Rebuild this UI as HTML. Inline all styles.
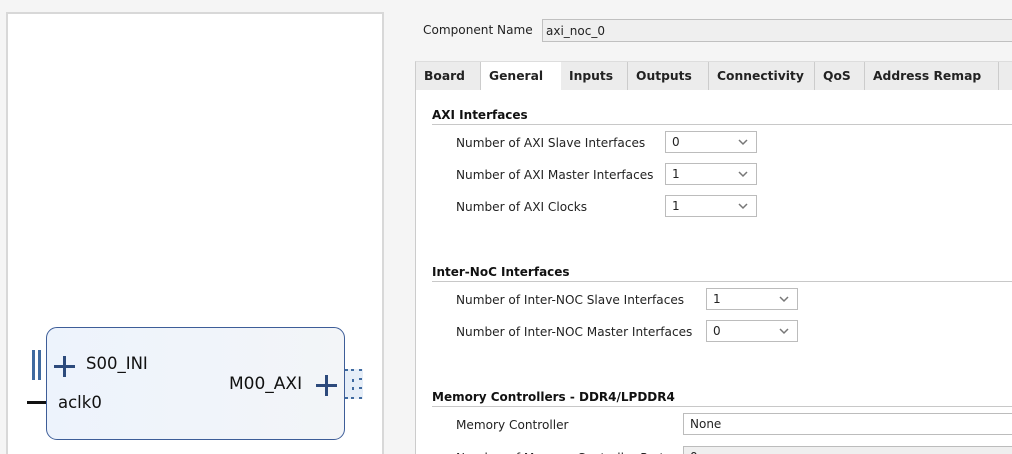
<!DOCTYPE html>
<html style="overflow:hidden"><head><style>
body{margin:0;width:1012px;height:454px;overflow:hidden;background:#f5f5f5;font-family:"DejaVu Sans","Liberation Sans",sans-serif;position:relative;font-size:12px;color:#222}
.a{position:absolute}
.lbl{position:absolute;font-size:12.1px;color:#222;white-space:nowrap}
.cb{position:absolute;height:22px;background:#fff;border:1px solid #bcbcbc;box-sizing:border-box;font-size:12px;line-height:21px;padding-left:6px}
.cb svg{position:absolute;right:8px;top:7px}
.sec{position:absolute;left:432px;font-weight:bold;font-size:12px;color:#111}
.hr{position:absolute;left:432px;right:0;height:1px;background:#c8c8c8}
.tab{position:absolute;top:62px;height:28px;line-height:29px;font-weight:bold;font-size:12.3px;color:#222;padding:0 8px;box-sizing:border-box;border-right:1px solid #ccc}
</style></head><body>
<div class="a" style="left:6px;top:12px;width:378px;height:442px;background:#fff;border:2px solid #d8d8d8;border-bottom:none;box-sizing:border-box"></div>
<div class="a" style="left:46px;top:327px;width:299px;height:113px;border:1px solid #3d5d98;border-radius:11px;background:linear-gradient(90deg,#edf3fc,#f3f5f8);box-sizing:border-box"></div>
<div class="a" style="left:32px;top:350px;width:3px;height:30px;background:#3f6aa0"></div>
<div class="a" style="left:38px;top:350px;width:3px;height:30px;background:#3f6aa0"></div>
<div class="a" style="left:27px;top:401px;width:19px;height:3px;background:#111"></div>
<div class="a" style="left:54px;top:365px;width:21px;height:3px;background:#2d4a7c"></div>
<div class="a" style="left:63px;top:356px;width:3px;height:21px;background:#2d4a7c"></div>
<div class="a" style="left:316px;top:384px;width:21px;height:3px;background:#2d4a7c"></div>
<div class="a" style="left:325px;top:375px;width:3px;height:21px;background:#2d4a7c"></div>
<svg class="a" style="left:345px;top:369px" width="18" height="30"><rect x="0" y="0" width="18" height="30" fill="#e6eef8"/><g fill="#3f6aa0"><rect x="0" y="0" width="3" height="2"/><rect x="6" y="0" width="3" height="2"/><rect x="14" y="0" width="3" height="2"/><rect x="14" y="9" width="3" height="2"/><rect x="14" y="18" width="3" height="2"/><rect x="0" y="28" width="3" height="2"/><rect x="6" y="28" width="3" height="2"/><rect x="14" y="28" width="3" height="2"/><rect x="7" y="10" width="2" height="3"/><rect x="7" y="18" width="2" height="3"/></g></svg>
<div class="lbl" style="left:86px;top:354px;font-size:16.5px;color:#111">S00_INI</div>
<div class="lbl" style="left:58px;top:393px;font-size:16.5px;color:#111">aclk0</div>
<div class="lbl" style="left:229px;top:374px;font-size:17px;color:#111">M00_AXI</div>
<div class="lbl" style="left:423px;top:23px">Component Name</div>
<div class="a" style="left:542px;top:19px;width:480px;height:23px;background:#efefef;border:1px solid #c0c0c0;box-sizing:border-box;line-height:22px;padding-left:3px;font-size:12px">axi_noc_0</div>
<div class="a" style="left:415px;top:61px;width:600px;height:400px;background:#fff;border-left:1px solid #ccc;border-top:1px solid #ddd"></div>
<div class="a" style="left:416px;top:62px;width:600px;height:28px;background:#ececec"></div>
<div class="tab" style="left:416px;width:65px">Board</div>
<div class="tab" style="left:481px;width:80px;background:#fff;border-right:none">General</div>
<div class="tab" style="left:561px;width:67px">Inputs</div>
<div class="tab" style="left:628px;width:81px">Outputs</div>
<div class="tab" style="left:709px;width:106px">Connectivity</div>
<div class="tab" style="left:815px;width:50px">QoS</div>
<div class="tab" style="left:865px;width:134px">Address Remap</div>
<div class="sec" style="top:108px">AXI Interfaces</div>
<div class="hr" style="top:124px"></div>
<div class="lbl" style="left:456px;top:136px">Number of AXI Slave Interfaces</div>
<div class="lbl" style="left:456px;top:168px">Number of AXI Master Interfaces</div>
<div class="lbl" style="left:456px;top:200px">Number of AXI Clocks</div>
<div class="cb" style="left:665px;top:131px;width:92px">0<svg width="10" height="7"><path d="M1 1l4 4 4-4" stroke="#777" stroke-width="1.5" fill="none"/></svg></div>
<div class="cb" style="left:665px;top:163px;width:92px">1<svg width="10" height="7"><path d="M1 1l4 4 4-4" stroke="#777" stroke-width="1.5" fill="none"/></svg></div>
<div class="cb" style="left:665px;top:195px;width:92px">1<svg width="10" height="7"><path d="M1 1l4 4 4-4" stroke="#777" stroke-width="1.5" fill="none"/></svg></div>
<div class="sec" style="top:265px">Inter-NoC Interfaces</div>
<div class="hr" style="top:281px"></div>
<div class="lbl" style="left:456px;top:293px">Number of Inter-NOC Slave Interfaces</div>
<div class="lbl" style="left:456px;top:325px">Number of Inter-NOC Master Interfaces</div>
<div class="cb" style="left:706px;top:288px;width:92px">1<svg width="10" height="7"><path d="M1 1l4 4 4-4" stroke="#777" stroke-width="1.5" fill="none"/></svg></div>
<div class="cb" style="left:706px;top:320px;width:92px">0<svg width="10" height="7"><path d="M1 1l4 4 4-4" stroke="#777" stroke-width="1.5" fill="none"/></svg></div>
<div class="sec" style="top:390px">Memory Controllers - DDR4/LPDDR4</div>
<div class="hr" style="top:406px"></div>
<div class="lbl" style="left:456px;top:418px">Memory Controller</div>
<div class="cb" style="left:683px;top:413px;width:340px;padding-left:6px">None</div>
<div class="lbl" style="left:456px;top:451px">Number of Memory Controller Ports</div>
<div class="cb" style="left:683px;top:446px;width:340px;background:#efefef">0</div>
</body></html>
